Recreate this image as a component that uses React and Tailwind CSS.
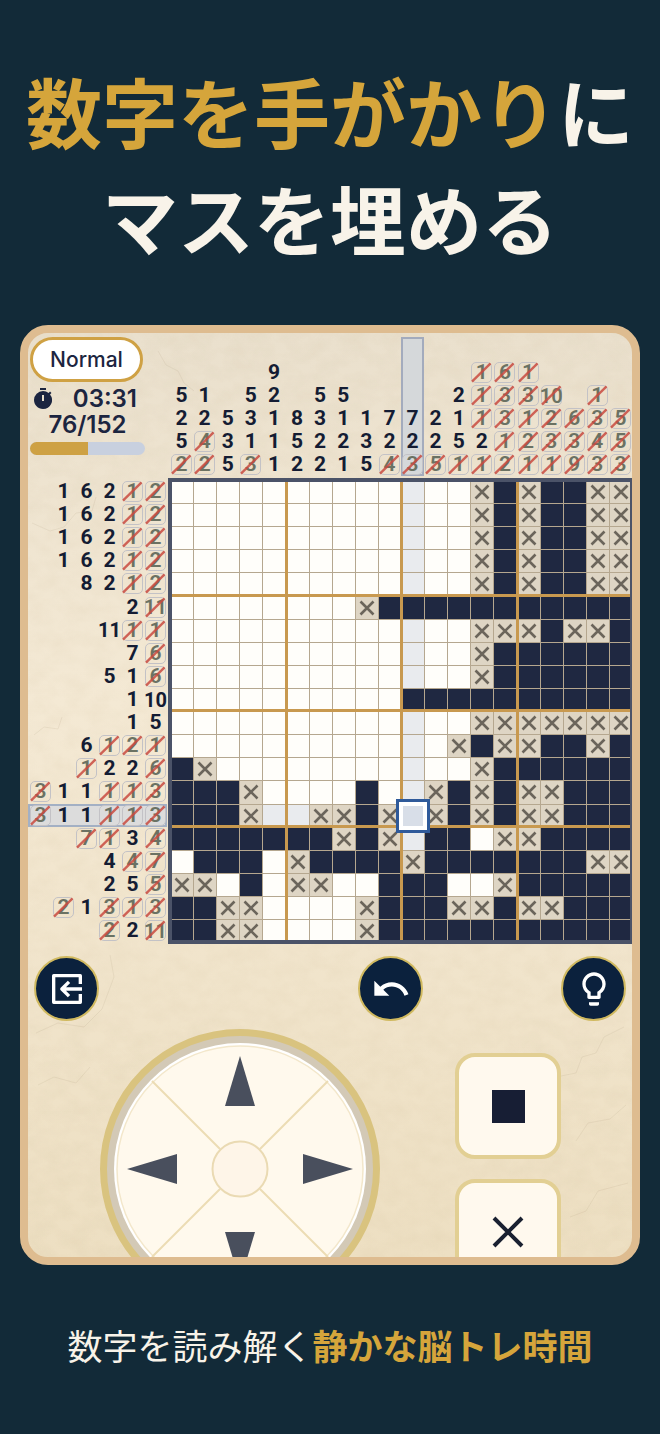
import React, { useState } from 'react';
import { MdTimer, MdUndo, MdLightbulbOutline } from 'react-icons/md';

// '#' filled, 'x' marked as empty, '.' untouched
const BOARD = [
  '.............x#x##xx',
  '.............x#x##xx',
  '.............x#x##xx',
  '.............x#x##xx',
  '.............x#x##xx',
  '........x###########',
  '.............xxx#xx#',
  '.............x######',
  '.............x######',
  '..........##########',
  '.............xxxxxxx',
  '............x#xx##x#',
  '#x...........x######',
  '###x....#..x#x#xx###',
  '###x..xx#x.x#x#xx###',
  '#######x#x.##.xx####',
  '.###.x####x#######xx',
  'xx.#.xx..###..x#####',
  '##xx....x###xx#xx###',
  '##xx....x###########',
];

// a trailing '-' means the clue is already crossed out
const COLUMN_CLUES = [
  '5 2 5 2-', '1 2 4- 2-', '5 3 5', '5 3 1 3-', '9 2 1 1 1',
  '8 5 2', '5 3 2 2', '5 1 2 1', '1 3 5', '7 2 4-',
  '7 2 3-', '2 2 5-', '2 1 5 1-', '1- 1- 1- 2 1-', '6- 3- 3- 1- 2-',
  '1- 3- 1- 2- 1-', '10- 2- 3- 1-', '6- 3- 9-', '1- 3- 4- 3-', '5- 5- 3-',
];

const ROW_CLUES = [
  '1 6 2 1- 2-', '1 6 2 1- 2-', '1 6 2 1- 2-', '1 6 2 1- 2-', '8 2 1- 2-',
  '2 11-', '11 1- 1-', '7 6-', '5 1 6-', '1 10',
  '1 5', '6 1- 2- 1-', '1- 2 2 6-', '3- 1 1 1- 1- 3-', '3- 1 1 1- 1- 3-',
  '7- 1- 3 4-', '4 4- 7-', '2 5 5-', '2- 1 3- 1- 3-', '2- 2 11-',
];

const Clue = ({ value }) => {
  const done = value.endsWith('-');
  const label = value.replace('-', '');
  const size = label.length > 1 ? 'text-[20px]' : 'text-[21px]';

  if (!done) {
    return (
      <span className={`flex h-[23px] w-[23px] shrink-0 items-center justify-center font-bold leading-none text-[#141c33] ${size}`}>
        {label}
      </span>
    );
  }

  return (
    <span className="flex h-[23px] w-[23px] shrink-0 items-center justify-center p-px">
      <span className={`relative flex h-full w-full items-center justify-center rounded-[5px] border border-[#c3c2c6] font-semibold leading-none text-[#6b7263] ${size}`}>
        {label}
        <svg viewBox="0 0 22 22" className="absolute -inset-px h-[21px] w-[21px]" aria-hidden="true">
          <path d="M1 20.5L20.5 1.5" stroke="#c94a40" strokeOpacity="0.85" strokeWidth="2.5" />
        </svg>
      </span>
    </span>
  );
};

const Cell = ({ state, row, column, cursor, onSelect }) => {
  const selected = cursor.row === row && cursor.column === column;
  const inLine = cursor.row === row || cursor.column === column;
  const background =
    state === '#' ? 'bg-[#1f2841]' :
    state === 'x' ? 'bg-[#ded5c4]' :
    inLine ? 'bg-[#e9ebee]' : 'bg-[#fffefa]';

  return (
    <button
      type="button"
      onClick={() => onSelect({ row, column })}
      aria-label={`${row + 1}-${column + 1}`}
      className={`relative flex aspect-square min-w-0 items-center justify-center border-l border-t border-[#b5a78f] ${background}`}
    >
      {state === 'x' && (
        <svg viewBox="0 0 16 16" className="h-4 w-4" aria-hidden="true">
          <path d="M1.5 1.5L14.5 14.5M14.5 1.5L1.5 14.5" stroke="#6b655b" strokeWidth="2.6" />
        </svg>
      )}
      {selected && (
        <span className="absolute -inset-1.5 z-20 border-[3px] border-[#2f5a9a] bg-white p-1">
          <span className="block h-full w-full bg-[#d8dee8]" />
        </span>
      )}
    </button>
  );
};

const Board = ({ cursor, onSelect }) => (
  <div className="relative">
    <div className="grid grid-cols-20">
      {BOARD.map((line, row) =>
        line.split('').map((state, column) => (
          <Cell
            key={`${row}-${column}`}
            state={state}
            row={row}
            column={column}
            cursor={cursor}
            onSelect={onSelect}
          />
        ))
      )}
    </div>
    {/* Guide lines every five cells */}
    {[25, 50, 75].map((at) => (
      <React.Fragment key={at}>
        <span className="pointer-events-none absolute inset-y-0 w-[3px] -translate-x-px bg-[#c8994f]" style={{ left: `${at}%` }} />
        <span className="pointer-events-none absolute inset-x-0 h-[3px] -translate-y-0.5 bg-[#c8994f]" style={{ top: `${at}%` }} />
      </React.Fragment>
    ))}
    <span className="pointer-events-none absolute -inset-0.5 z-10 border-4 border-[#4b5368]" />
  </div>
);

const RoundButton = ({ label, className = '', children }) => (
  <button
    type="button"
    aria-label={label}
    className={`flex h-[65px] w-[65px] items-center justify-center rounded-full border-2 border-[#d0b95f] bg-[#0b213d] text-white ${className}`}
  >
    {children}
  </button>
);

const ModeButton = ({ label, children }) => (
  <button
    type="button"
    aria-label={label}
    className="flex h-[106px] w-[106px] shrink-0 items-center justify-center rounded-[20px] border-4 border-[#e2cf93] bg-[#fff9ee]"
  >
    {children}
  </button>
);

const ARROWS = [
  { label: '上', place: 'col-start-2 row-start-1 items-start justify-center', size: 'h-[50px] w-[30px]', box: '0 0 30 50', points: '15,0 30,50 0,50' },
  { label: '左', place: 'col-start-1 row-start-2 items-center justify-start', size: 'h-[30px] w-[50px]', box: '0 0 50 30', points: '0,15 50,0 50,30' },
  { label: '右', place: 'col-start-3 row-start-2 items-center justify-end', size: 'h-[30px] w-[50px]', box: '0 0 50 30', points: '50,15 0,0 0,30' },
  { label: '下', place: 'col-start-2 row-start-3 items-end justify-center', size: 'h-[50px] w-[30px]', box: '0 0 30 50', points: '15,50 0,0 30,0' },
];

const DirectionPad = () => (
  <div className="relative h-[280px] w-[280px] shrink-0">
    <svg viewBox="0 0 280 280" className="h-full w-full" aria-hidden="true">
      <circle cx="140" cy="140" r="134" fill="#d3c9b6" />
      <circle cx="140" cy="140" r="136.5" fill="none" stroke="#d9c37f" strokeWidth="7" />
      <circle cx="140" cy="140" r="126" fill="#ffffff" />
      <circle cx="140" cy="140" r="123" fill="#fff9ed" stroke="#f3e7cb" strokeWidth="1.5" />
      <path d="M52 52L120 120M228 52L160 120M52 228L120 160M228 228L160 160" stroke="#ecdcb4" strokeWidth="2" />
      <circle cx="140" cy="140" r="27.5" fill="#fef5e8" stroke="#eadab3" strokeWidth="2" />
    </svg>
    <div className="absolute inset-[27px] grid grid-cols-3 grid-rows-3">
      {ARROWS.map((arrow) => (
        <button key={arrow.label} type="button" aria-label={arrow.label} className={`flex ${arrow.place}`}>
          <svg viewBox={arrow.box} className={arrow.size} aria-hidden="true">
            <polygon points={arrow.points} fill="#494f5d" />
          </svg>
        </button>
      ))}
    </div>
  </div>
);

const PaperTexture = () => (
  <svg className="pointer-events-none absolute inset-0 h-full w-full" aria-hidden="true">
    <filter id="paper">
      <feTurbulence type="fractalNoise" baseFrequency="0.05 0.07" numOctaves="5" seed="7" />
      <feColorMatrix values="0 0 0 0 0.5  0 0 0 0 0.38  0 0 0 0 0.2  1.6 0 0 0 -0.5" />
    </filter>
    <rect width="100%" height="100%" filter="url(#paper)" opacity="0.08" />
    {/* fine creases */}
    <g fill="none" stroke="#8a7454" strokeOpacity="0.1">
      <path d="M130 18l8 14 12 6 6 12 10 8M4 190l18 8 14-4 12-14 16-2 4-14M6 402l10-8 14 2 4-12M8 700l22-10 26 4 18-18 12-32-4-22M10 752l16-8 22 6 14-16" />
      <path d="M596 694l-20 10-8 16-14 4-6 16-20 4M598 772l-16 14-22 4-12 18M600 850l-30 8-12 20-16 6" />
    </g>
  </svg>
);

const App = () => {
  const [cursor, setCursor] = useState({ row: 14, column: 10 });

  return (
    <main className="flex min-h-screen flex-col overflow-hidden bg-[#122a38] px-5 pt-[57px] font-['Noto_Sans_CJK_JP',sans-serif]">
      <h1 className="whitespace-nowrap text-center text-[76px] font-bold leading-[107px] text-[#f8f3e9]">
        <span className="-mx-5 block"><span className="text-[#d5a53b]">数字を手がかり</span>に</span>
        <span className="block">マスを埋める</span>
      </h1>

      <section className="relative mt-[54px] overflow-hidden rounded-[28px] border-8 border-[#debc90] bg-linear-to-b from-[#eae0cd] via-[#f4e9d4] via-40% to-[#eddfc2]">
        <PaperTexture />

        <div className="relative pt-1">
          <div className="grid grid-cols-[142px_1fr]">
            {/* Status */}
            <div className="flex h-[143px] flex-col pl-0.5 font-['Inter',sans-serif] text-[#1c2540]">
              <div className="flex h-[45px] w-[113px] items-center justify-center rounded-full border-[3px] border-[#cfa144] bg-white text-[21px] font-medium">
                Normal
              </div>
              <div className="mt-1 flex h-[26px] w-[115px] items-center justify-between pl-px pr-2 text-[24px] font-semibold leading-none">
                <MdTimer className="h-6 w-6 shrink-0" />
                <span>03:31</span>
              </div>
              <div className="flex h-[26px] w-[115px] items-center justify-center text-[24px] font-semibold leading-none">
                76/152
              </div>
              <div className="mt-1 h-[13px] w-[115px] overflow-hidden rounded-full bg-[#c8d0df]">
                <div className="h-full bg-[#cea144]" style={{ width: `${(76 / 152) * 100}%` }} />
              </div>
            </div>

            {/* Column clues */}
            <div className="grid h-[139px] grid-cols-20 font-['Roboto',sans-serif]">
              {COLUMN_CLUES.map((clues, column) => (
                <div
                  key={column}
                  className={`flex flex-col items-center justify-end ${
                    column === cursor.column ? 'bg-[#d5d8da] outline-2 -outline-offset-2 outline-[#a3abbd]' : ''
                  }`}
                >
                  {clues.split(' ').map((clue, i) => <Clue key={i} value={clue} />)}
                </div>
              ))}
            </div>

            {/* Row clues */}
            <div className="mr-[3px] grid grid-rows-20 font-['Roboto',sans-serif]">
              {ROW_CLUES.map((clues, row) => (
                <div
                  key={row}
                  className={`flex min-h-0 items-center justify-end ${
                    row === cursor.row ? 'bg-[#dcdcdc] outline-2 -outline-offset-2 outline-[#a3b0c4]' : ''
                  }`}
                >
                  {clues.split(' ').map((clue, i) => <Clue key={i} value={clue} />)}
                </div>
              ))}
            </div>

            <Board cursor={cursor} onSelect={setCursor} />
          </div>

          <div className="mt-3.5 flex items-center px-1.5">
            <RoundButton label="終了">
              <svg viewBox="0 0 24 24" className="h-10 w-10" fill="none" stroke="currentColor" strokeWidth="2" strokeLinejoin="round" aria-hidden="true">
                <path d="M20 9V4H4v16h16v-5M21 12H9.5M13.2 7.7L8.9 12l4.3 4.3" />
              </svg>
            </RoundButton>
            <RoundButton label="元に戻す" className="ml-auto mr-[138px]">
              <MdUndo className="h-10 w-10" />
            </RoundButton>
            <RoundButton label="ヒント">
              <MdLightbulbOutline className="h-10 w-10" />
            </RoundButton>
          </div>

          {/* Controls run past the lower edge of the screen */}
          <div className="mt-2 flex h-[228px] items-start justify-between overflow-hidden pl-[72px] pr-[71px]">
            <DirectionPad />
            <div className="flex flex-col gap-5 pt-6">
              <ModeButton label="塗る">
                <span className="h-[33px] w-[33px] bg-[#171e34]" />
              </ModeButton>
              <ModeButton label="バツ">
                <svg viewBox="0 0 32 32" className="h-8 w-8" aria-hidden="true">
                  <path d="M2 2L30 30M30 2L2 30" stroke="#1a2131" strokeWidth="4" />
                </svg>
              </ModeButton>
            </div>
          </div>
        </div>
      </section>

      <p className="mt-[55px] whitespace-nowrap text-center text-[35px] leading-[50px] text-[#f8f3e9]">
        数字を読み解く<strong className="font-bold text-[#d5a53b]">静かな脳トレ時間</strong>
      </p>
    </main>
  );
};

export default App;
